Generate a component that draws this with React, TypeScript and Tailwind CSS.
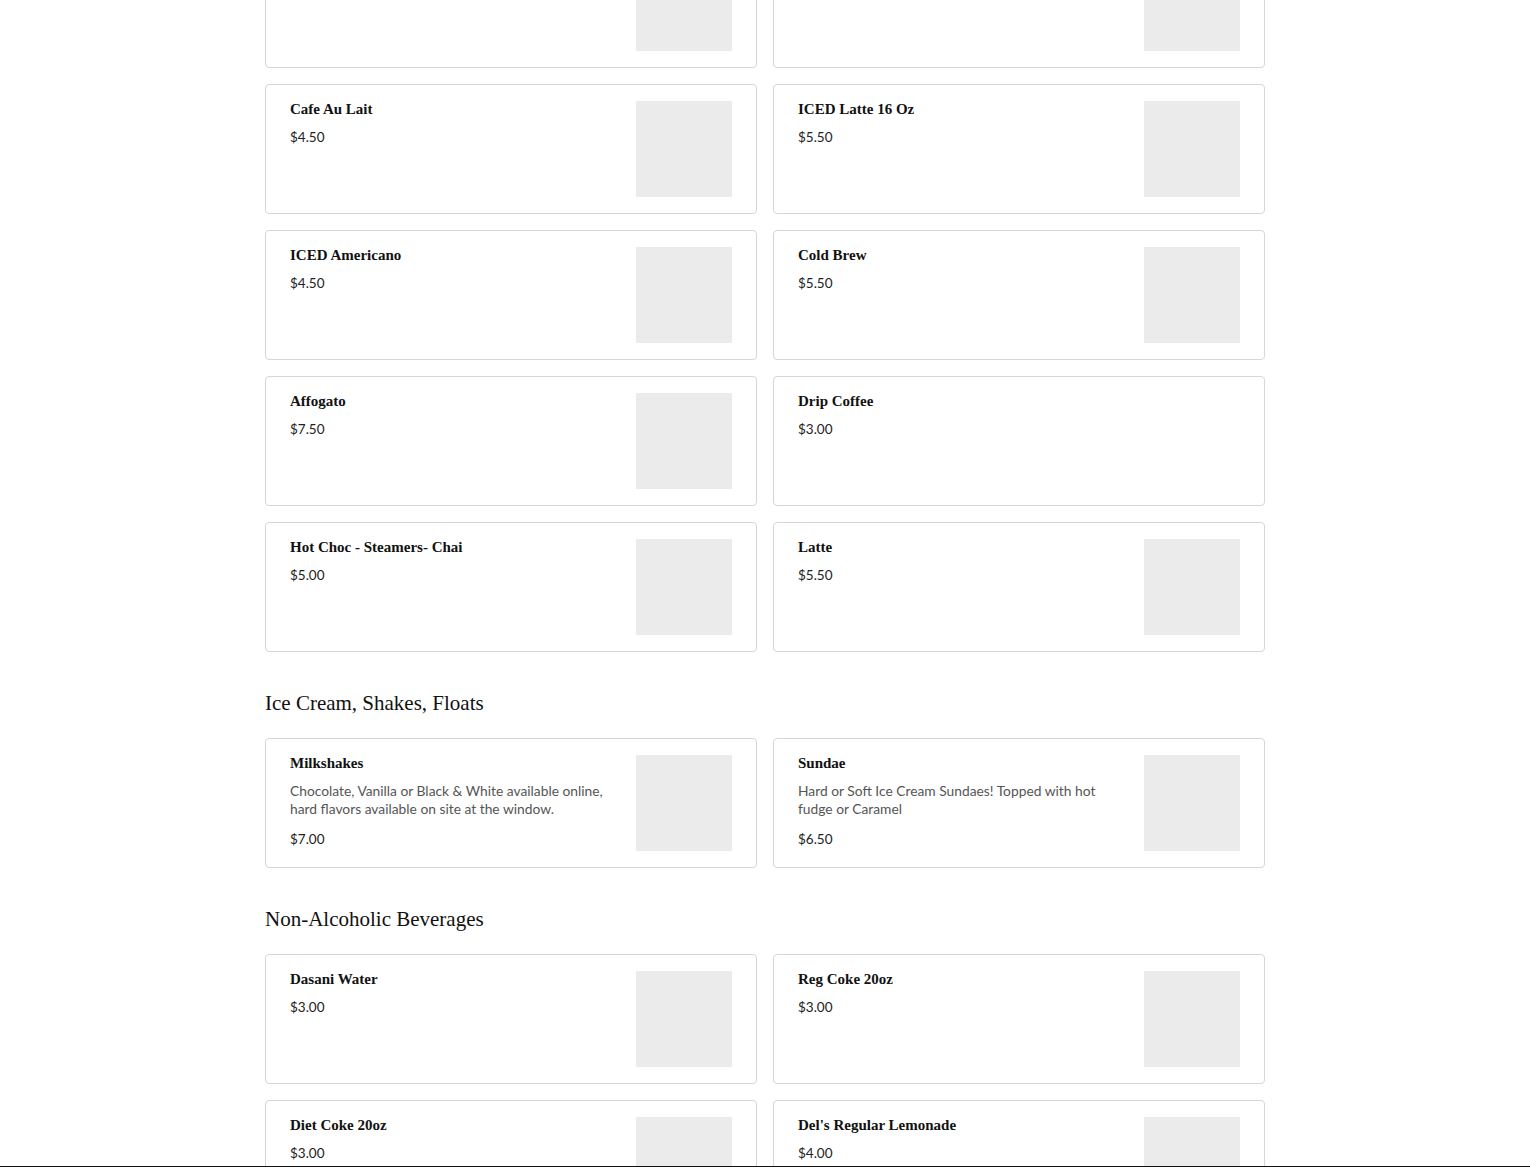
import React from "react";

type Item = { name: string; price: string; desc?: string; noImage?: boolean };

const sections: { title?: string; items: Item[] }[] = [
  {
    items: [
      { name: "Espresso", price: "$3.50" },
      { name: "Cappuccino", price: "$5.00" },
      { name: "Cafe Au Lait", price: "$4.50" },
      { name: "ICED Latte 16 Oz", price: "$5.50" },
      { name: "ICED Americano", price: "$4.50" },
      { name: "Cold Brew", price: "$5.50" },
      { name: "Affogato", price: "$7.50" },
      { name: "Drip Coffee", price: "$3.00", noImage: true },
      { name: "Hot Choc - Steamers- Chai", price: "$5.00" },
      { name: "Latte", price: "$5.50" },
    ],
  },
  {
    title: "Ice Cream, Shakes, Floats",
    items: [
      {
        name: "Milkshakes",
        price: "$7.00",
        desc: "Chocolate, Vanilla or Black & White available online, hard flavors available on site at the window.",
      },
      {
        name: "Sundae",
        price: "$6.50",
        desc: "Hard or Soft Ice Cream Sundaes! Topped with hot fudge or Caramel",
      },
    ],
  },
  {
    title: "Non-Alcoholic Beverages",
    items: [
      { name: "Dasani Water", price: "$3.00" },
      { name: "Reg Coke 20oz", price: "$3.00" },
      { name: "Diet Coke 20oz", price: "$3.00" },
      { name: "Del's Regular Lemonade", price: "$4.00" },
    ],
  },
];

const serif = "font-['Liberation_Serif',serif]";
const sans = "font-['Lato','Liberation_Sans',sans-serif]";

const Card = ({ item }: { item: Item }) => (
  <div className="flex min-h-[130px] justify-between gap-6 rounded border border-[#d6d6d6] bg-white px-6 py-4">
    <div className="flex flex-col">
      <div className={`${serif} text-[15px] font-bold leading-4 text-[#111]`}>{item.name}</div>
      {item.desc && (
        <p className={`${sans} mt-[11px] text-[13.8px] leading-[18px] text-[#555]`}>{item.desc}</p>
      )}
      <div className={`${sans} ${item.desc ? "mt-[11px]" : "mt-[10px]"} text-[13.5px] leading-5 text-[#222]`}>
        {item.price}
      </div>
    </div>
    {!item.noImage && <div className="h-24 w-24 shrink-0 bg-[#ebebeb]" />}
  </div>
);

const App = () => {
  return (
    <div className="relative h-[1167px] overflow-hidden bg-white">
      <div className="mx-auto -mt-[62px] w-[1000px]">
        {sections.map((sec, i) => (
          <div key={i}>
            {sec.title && (
              <h2 className={`${serif} mt-[37px] mb-[21px] text-[21px] leading-7 text-[#111]`}>
                {sec.title}
              </h2>
            )}
            <div className="grid grid-cols-2 gap-4">
              {sec.items.map((it) => (
                <Card key={it.name} item={it} />
              ))}
            </div>
          </div>
        ))}
      </div>
      <div className="absolute inset-x-0 bottom-0 h-px bg-[#111]" />
    </div>
  );
};

export default App;
